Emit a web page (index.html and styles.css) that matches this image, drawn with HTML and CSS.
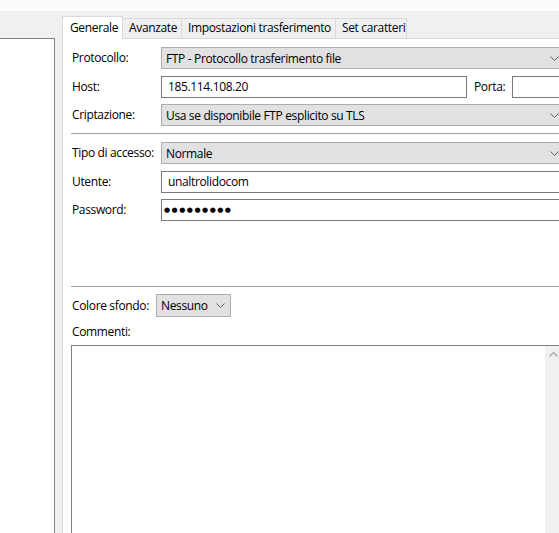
FILE: index.html
```html
<!DOCTYPE html>
<html lang="it">
<head>
<meta charset="utf-8">
<title>Gestore siti</title>
<link rel="stylesheet" href="styles.css">
</head>
<body>
<div class="topstrip"></div>
<div class="main">
  <div class="sitetree"></div>
  <div class="tabctl">
    <div class="tabs">
      <div class="tab active t-gen">Generale</div>
      <div class="tab t-av">Avanzate</div>
      <div class="tab t-imp">Impostazioni trasferimento</div>
      <div class="tab t-set">Set caratteri</div>
    </div>
    <div class="panel">
      <div class="fields">
        <div class="label">Protocollo:</div>
        <div class="select"><span class="value">FTP - Protocollo trasferimento file</span><span class="chev"><svg width="9" height="5" viewBox="0 0 9 5"><path d="M0.5 0.5 L4.5 4.5 L8.5 0.5" fill="none" stroke="#606060" stroke-width="1"/></svg></span></div>
        <div class="label">Host:</div>
        <div class="hostrow">
          <div class="input host">185.114.108.20</div>
          <div class="porta">Porta:</div>
          <div class="input port"></div>
        </div>
        <div class="label">Criptazione:</div>
        <div class="select"><span class="value">Usa se disponibile FTP esplicito su TLS</span><span class="chev"><svg width="9" height="5" viewBox="0 0 9 5"><path d="M0.5 0.5 L4.5 4.5 L8.5 0.5" fill="none" stroke="#606060" stroke-width="1"/></svg></span></div>
      </div>
      <div class="sep"></div>
      <div class="fields second">
        <div class="label">Tipo di accesso:</div>
        <div class="select"><span class="value">Normale</span><span class="chev"><svg width="9" height="5" viewBox="0 0 9 5"><path d="M0.5 0.5 L4.5 4.5 L8.5 0.5" fill="none" stroke="#606060" stroke-width="1"/></svg></span></div>
        <div class="label">Utente:</div>
        <div class="input">unaltrolidocom</div>
        <div class="label">Password:</div>
        <div class="input pass"><span class="dots">●●●●●●●●●</span></div>
      </div>
      <div class="sep sep2"></div>
      <div class="colorrow">
        <div class="label colorlabel">Colore sfondo:</div>
        <div class="select small"><span class="value">Nessuno</span><span class="chev"><svg width="9" height="5" viewBox="0 0 9 5"><path d="M0.5 0.5 L4.5 4.5 L8.5 0.5" fill="none" stroke="#606060" stroke-width="1"/></svg></span></div>
      </div>
      <div class="label commentlabel">Commenti:</div>
      <div class="comments">
        <div class="commenttext"></div>
        <div class="vscroll"><div class="arrow"><svg width="9" height="5" viewBox="0 0 9 5"><path d="M0.5 4.5 L4.5 0.5 L8.5 4.5" fill="none" stroke="#a3a3a3" stroke-width="1.2"/></svg></div></div>
      </div>
    </div>
  </div>
</div>
</body>
</html>
```
FILE: styles.css
```css
* { box-sizing: border-box; }
html, body { margin: 0; padding: 0; }
body {
  width: 559px;
  height: 533px;
  overflow: hidden;
  background: #f0f0f0;
  font-family: "Open Sans", "Noto Sans", sans-serif;
  font-size: 12px;
  letter-spacing: -0.35px;
  color: #000;
}
.topstrip { height: 11px; background: #fcfcfc; }
.main { display: flex; height: 522px; }
.sitetree {
  flex: none;
  width: 55px;
  margin-top: 27px;
  background: #fff;
  border-top: 1px solid #828282;
  border-right: 1px solid #828282;
}
.tabctl {
  flex: none;
  width: 510px;
  margin-left: 7px;
  padding-top: 5px;
  display: flex;
  flex-direction: column;
}
.tabs {
  display: flex;
  align-items: flex-start;
  height: 22px;
  position: relative;
  z-index: 1;
}
.tab {
  flex: none;
  margin-top: 2px;
  height: 20px;
  padding: 1px 0 0 6px;
  line-height: 16px;
  border: 1px solid #d9d9d9;
  border-bottom: 0;
  background: #f0f0f0;
  margin-left: -1px;
  white-space: nowrap;
  overflow: hidden;
}
.tab.active {
  margin-top: 0;
  margin-left: 0;
  height: 23px;
  padding: 3px 0 0 7px;
  background: #fff;
  position: relative;
  z-index: 2;
}
.t-gen { width: 61px; }
.t-av { width: 60px; }
.t-imp { width: 155px; }
.t-set { width: 72px; }
.panel {
  flex: 1;
  background: #fff;
  border: 1px solid #d9d9d9;
  padding: 8px 8px 0 8px;
}
.fields {
  display: grid;
  grid-template-columns: 90px 1fr;
  row-gap: 6.5px;
  align-items: center;
}
.label { padding-left: 1px; line-height: 16px; white-space: nowrap; }
.select {
  height: 22px;
  border: 1px solid #adadad;
  background: #e1e1e1;
  display: flex;
  align-items: center;
  justify-content: space-between;
  padding-left: 4px;
  white-space: nowrap;
}
.chev {
  width: 17px;
  flex: none;
  display: flex;
  justify-content: center;
  align-items: center;
  padding-left: 1px;
}
.chev svg { display: block; }
.input {
  height: 22px;
  border: 1px solid #7a7a7a;
  background: #fff;
  display: flex;
  align-items: center;
  padding-left: 6px;
  white-space: nowrap;
}
.hostrow { display: flex; align-items: center; }
.input.host { width: 306px; flex: none; }
.porta { width: 45px; flex: none; padding-left: 7px; }
.input.port { flex: 1; }
.input.pass { padding-left: 2px; }
.dots {
  font-family: "DejaVu Sans", sans-serif;
  font-size: 7px;
  letter-spacing: 1.5px;
  line-height: 10px;
}
.sep { height: 1px; background: #a0a0a0; margin: 7px 0 8px 0; }
.sep2 { margin: 65px 0 7px 0; }
.colorrow { display: flex; align-items: center; }
.colorlabel { width: 85px; flex: none; }
.select.small { width: 75px; height: 23px; }
.select.small .chev { width: 19px; padding-left: 0; }
.commentlabel { margin-top: 7px; }
.comments {
  margin-top: 5px;
  height: 200px;
  border: 1px solid #828282;
  background: #fff;
  display: flex;
}
.commenttext { flex: 1; }
.vscroll { width: 17px; flex: none; background: #f0f0f0; }
.arrow { height: 17px; display: flex; align-items: center; justify-content: center; }
.arrow svg { display: block; }
```
